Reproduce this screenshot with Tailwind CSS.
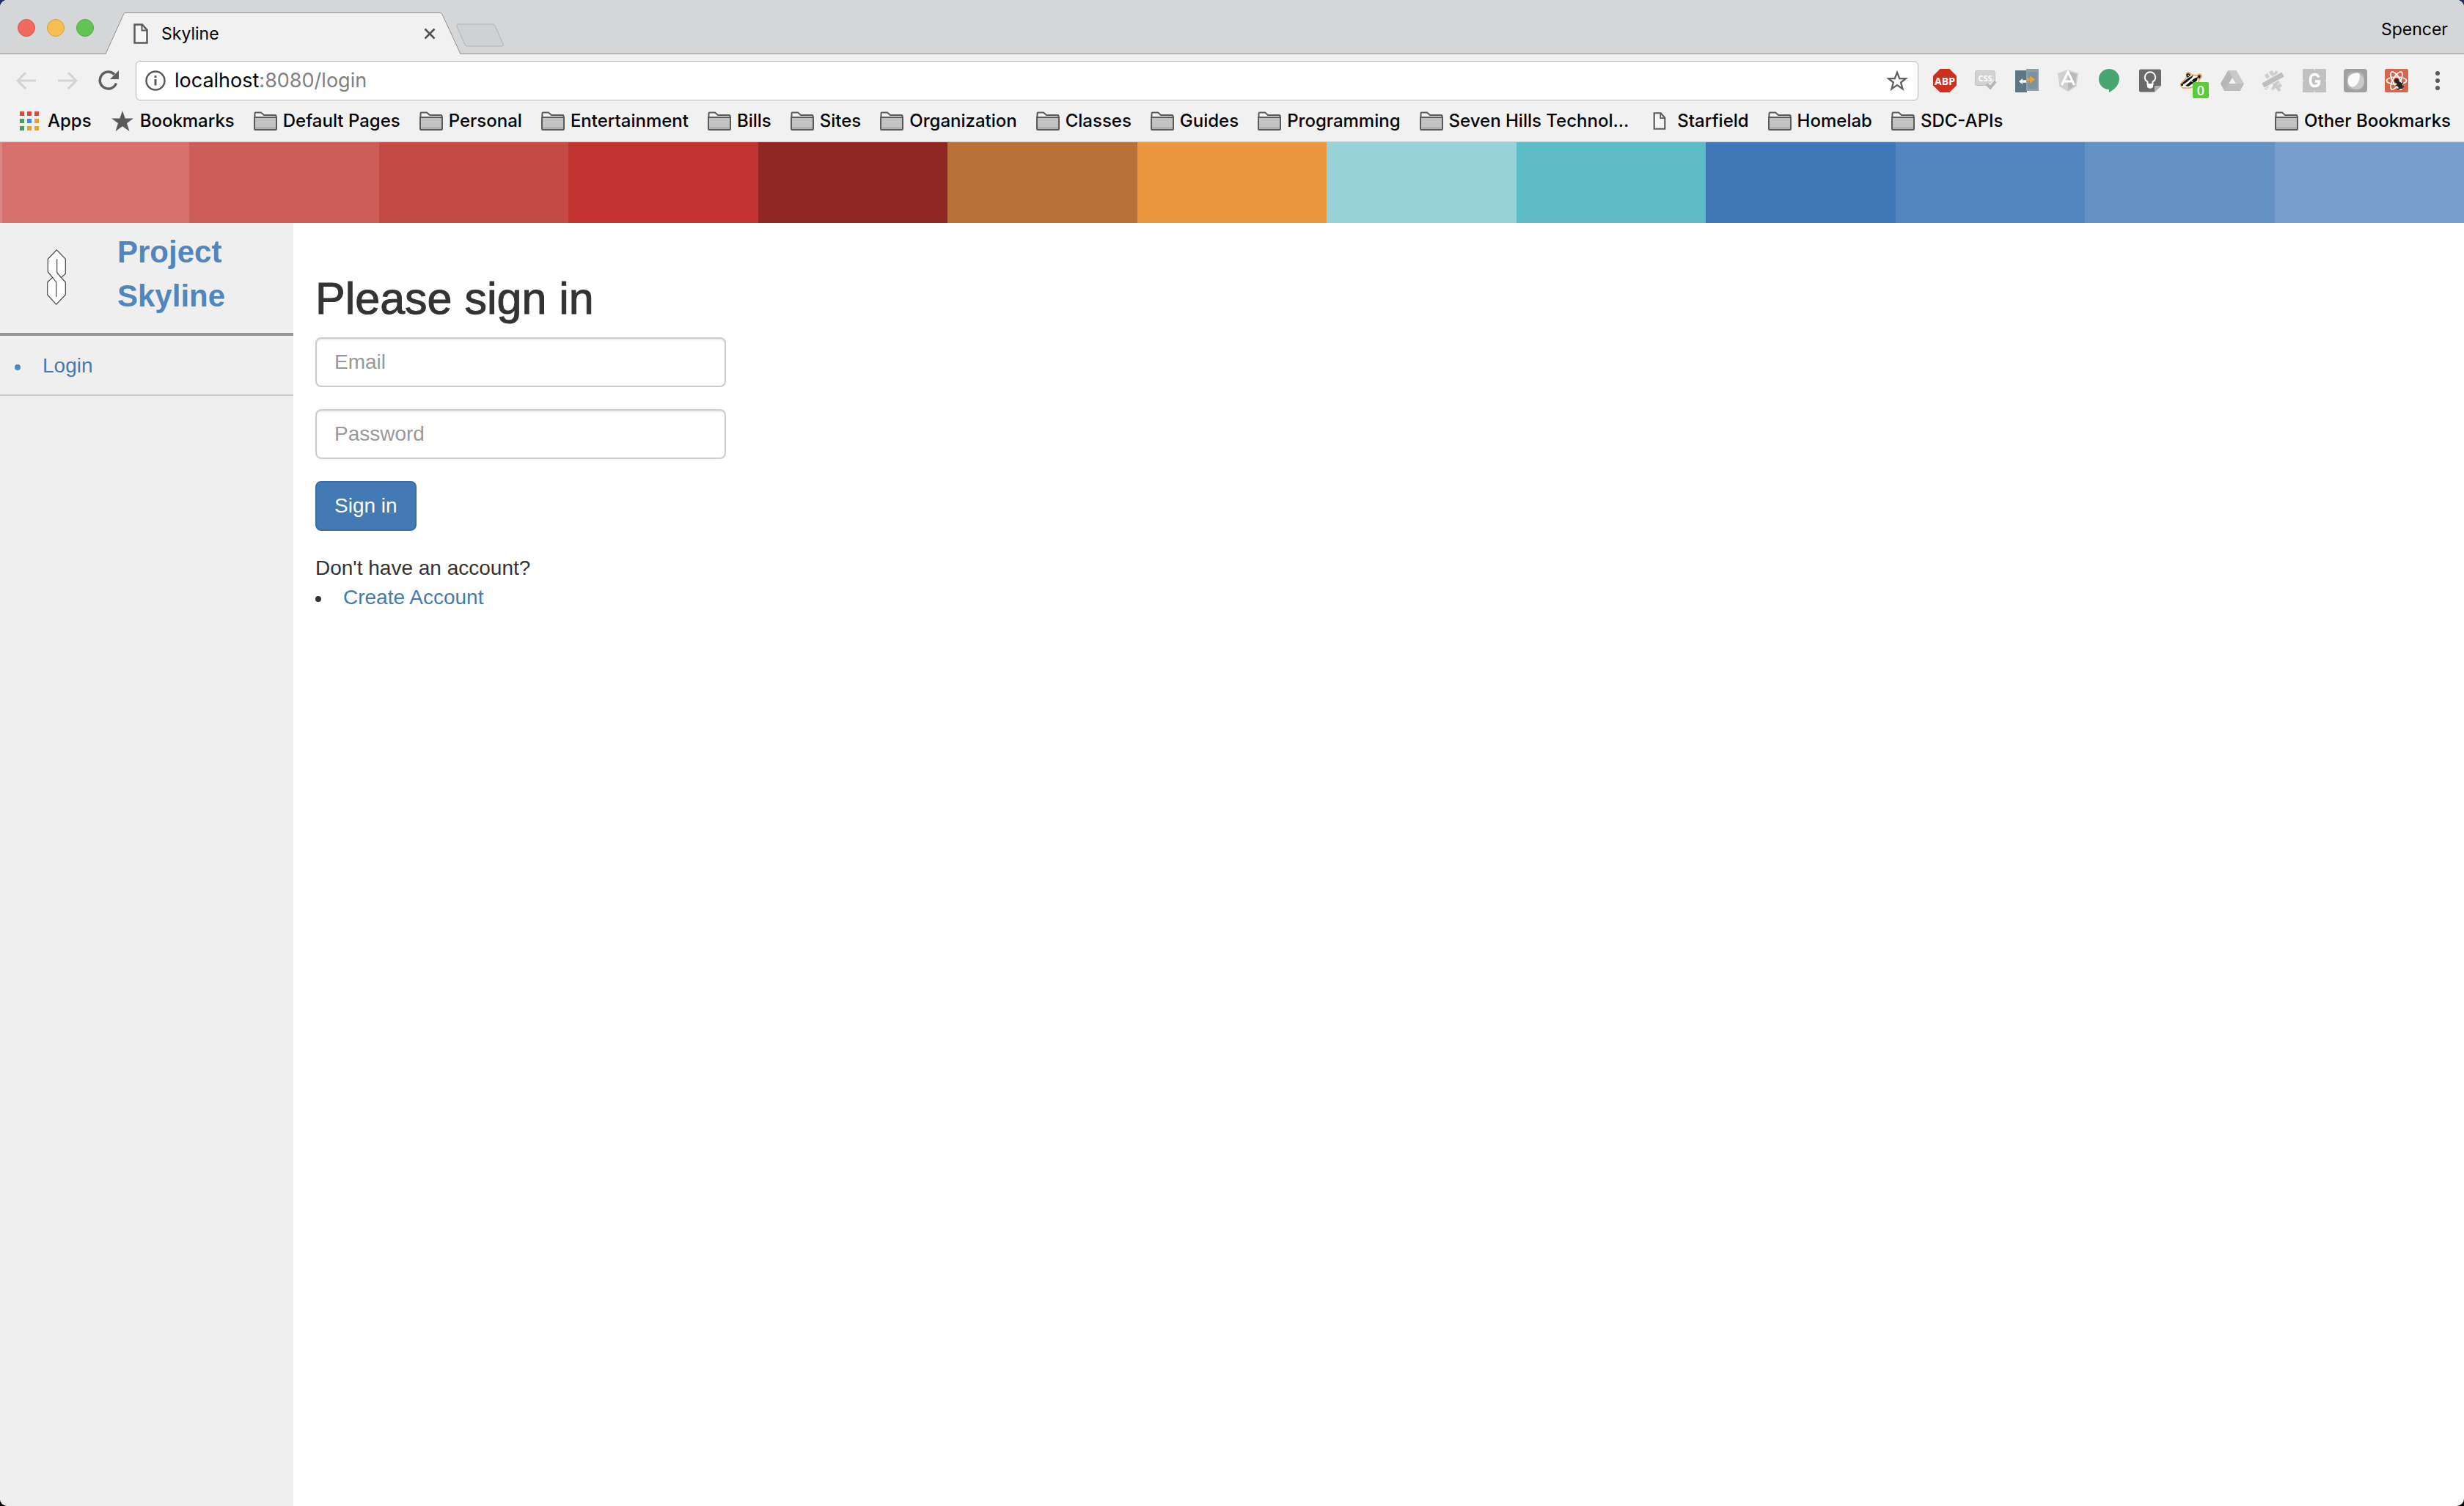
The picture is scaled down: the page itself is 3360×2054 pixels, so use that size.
<!DOCTYPE html>
<html lang="en">
<head>
<meta charset="utf-8">
<title>Skyline</title>
<script src="https://cdn.jsdelivr.net/npm/@tailwindcss/browser@4"></script>
</head>
<body class="min-h-screen bg-linear-to-b from-[#22305a] to-black">
<svg class="hidden">
  <symbol id="folder" viewBox="0 0 32 26">
    <path d="M1.5 8V2.5Q1.5 1.500 2.500 1.500H10L14 5H29.500Q30.500 5 30.500 6V8Z" fill="#f4f4f4" stroke="#5a5a5a" stroke-width="2"/>
    <path d="M1 8H31V24Q31 25 30 25H2Q1 25 1 24Z" fill="#c3c3c3" stroke="#5a5a5a" stroke-width="2"/>
    <path d="M2 22.500H30" stroke="#a9a9a9" stroke-width="2"/>
  </symbol>
  <symbol id="page" viewBox="0 0 20 28">
    <path d="M1.500 1.500H12L18.500 9V26.500H1.500Z" fill="#f5f5f5" stroke="#5a5a5a" stroke-width="2.500"/>
    <path d="M11.500 1.500V9.500H18.500" fill="none" stroke="#5a5a5a" stroke-width="2"/>
  </symbol>
</svg>
<div class="flex min-h-screen flex-col overflow-hidden rounded-[10px] bg-white">
  <header class="bg-[#f1f1f1] font-[Inter,sans-serif] text-black">
    <div class="relative flex h-[74px] items-end bg-[#d5d6d8] shadow-[inset_0_-1px_0_#8f9094]">
      <div class="flex h-full w-[144px] shrink-0 gap-4 pt-[26px] pl-6">
        <button class="size-6 rounded-full border border-[#d9534a] bg-[#ed6b60]" aria-label="Close window"></button>
        <button class="size-6 rounded-full border border-[#d9a13c] bg-[#f5bf4f]" aria-label="Minimize window"></button>
        <button class="size-6 rounded-full border border-[#4fa83f] bg-[#61c554]" aria-label="Zoom window"></button>
      </div>
      <div class="relative h-[57px] w-[484px]">
        <svg class="absolute inset-0 size-full" viewBox="0 0 484 57"><path d="M0 57L24.500 2.500Q25 .5 27 .5H456Q458 .5 459 2.500L484 57Z" fill="#f1f1f1"/><path d="M0 56.500L24.500 2.500Q25 .5 27 .5H456Q458 .5 459 2.500L484 56.500" fill="none" stroke="#8f9094"/></svg>
        <div class="relative flex h-full items-center pr-[34px] pl-[38px]">
          <svg class="h-7 w-5"><use href="#page"/></svg>
          <span class="ml-[18px] flex-1 text-[23px] leading-7">Skyline</span>
          <button aria-label="Close tab"><svg class="size-4" viewBox="0 0 16 16"><path d="M1.500 1.500L14.500 14.500M14.500 1.500L1.500 14.500" stroke="#505050" stroke-width="2.500"/></svg></button>
        </div>
      </div>
      <button class="-ml-2 mb-[10px] h-8 w-[68px]" aria-label="New tab"><svg class="size-full" viewBox="0 0 68 32"><path d="M5 1H51Q54 1 55 3L66 28Q67 31 64 31H18Q15 31 14 29L3 4Q2 1 5 1Z" fill="#d0d1d2" stroke="#b0b1b3"/></svg></button>
      <span class="mb-5 ml-auto pr-[22px] text-[23px] leading-7">Spencer</span>
    </div>
    <div class="flex h-[72px] items-center pr-7 pl-[22px]">
      <button aria-label="Back"><svg class="size-7" viewBox="0 0 28 28"><path d="M13 3L2 14L13 25M2 14H27" fill="none" stroke="#d3d3d3" stroke-width="3"/></svg></button>
      <button class="ml-7" aria-label="Forward"><svg class="size-7" viewBox="0 0 28 28"><path d="M15 3L26 14L15 25M26 14H1" fill="none" stroke="#d3d3d3" stroke-width="3"/></svg></button>
      <button class="ml-7" aria-label="Reload"><svg class="size-7" viewBox="0 0 28 28"><path d="M24.500 17.500A11.500 11.500 0 1 1 22 5.500" fill="none" stroke="#5f5f5f" stroke-width="3.500"/><path d="M28 0V12H16Z" fill="#5f5f5f"/></svg></button>
      <div class="ml-[23px] flex h-[54px] flex-1 items-center rounded-md border border-[#b5b5b5] bg-white pr-3 pl-3">
        <svg class="size-7 shrink-0" viewBox="0 0 28 28"><circle cx="14" cy="14" r="12.500" fill="none" stroke="#5a5a5a" stroke-width="2.500"/><path d="M14 12V20.500M14 7V10" stroke="#5a5a5a" stroke-width="3"/></svg>
        <a href="#" class="ml-3 flex-1 text-[27px] leading-8">localhost<span class="text-[#808080]">:8080/login</span></a>
        <button aria-label="Bookmark this page"><svg class="h-7 w-8" viewBox="0 0 32 30"><path d="M16 3L19.500 12H28.500L21.500 17.700L24 27L16 21.500L8 27L10.500 17.700L3.500 12H12.500Z" fill="none" stroke="#5f5f5f" stroke-width="2.500"/></svg></button>
      </div>
      <div class="ml-5 flex items-center gap-6">
        <svg class="size-8" viewBox="0 0 32 32"><path d="M9.500 0H22.500L32 9.500V22.500L22.500 32H9.500L0 22.500V9.500Z" fill="#cb311c"/><text x="16" y="21.500" text-anchor="middle" class="font-['Open_Sans',sans-serif] text-[14px] font-bold" fill="#fff">ABP</text></svg>
        <svg class="size-8" viewBox="0 0 32 32"><rect x="1.500" y="2.500" width="27" height="20" rx="2" fill="#d2d2d2" stroke="#c2c2c2"/><text x="15" y="16.500" text-anchor="middle" class="font-['Open_Sans',sans-serif] text-[11px] font-bold" fill="#fff">CSS</text><path d="M18 21L22 26L29 17" fill="none" stroke="#f1f1f1" stroke-width="7"/><path d="M17 20.500L22 25.500L29 17" fill="none" stroke="#b5b5b5" stroke-width="4"/></svg>
        <svg class="size-8" viewBox="0 0 32 32"><path d="M0 2H16V32H0Z" fill="#5d7684"/><path d="M15 0H32V30H15Z" fill="#8b9faa"/><path d="M18 4H30V27H18Z" fill="#7b929f"/><path d="M15 17H7" stroke="#fff" stroke-width="3.500"/><path d="M10 13L5 17L10 21Z" fill="#fff"/><path d="M15 14.500H22" stroke="#efa12f" stroke-width="3.500"/><path d="M20 9L27 14.500L20 20Z" fill="#efa12f"/></svg>
        <svg class="size-8" viewBox="0 0 32 32"><path d="M16 1L30 6L27.500 24L16 31L4.500 24L2 6Z" fill="#d0d0d0"/><path d="M16 3V29L25.500 23L28 7.500Z" fill="#b9b9b9"/><path d="M7.500 22L16 4L24.500 22M11 17H21" fill="none" stroke="#fff" stroke-width="3"/></svg>
        <svg class="size-8" viewBox="0 0 32 32"><path d="M16 0A14 14 0 0 1 30 14Q29.500 25 16 32V28A14 14 0 0 1 16 0Z" fill="#4aa671"/></svg>
        <svg class="size-8" viewBox="0 0 32 32"><path d="M3 .5H29Q31 .5 31 2.500V23L22 31.500H3Q1 31.500 1 29.500V2.500Q1 .5 3 .5Z" fill="#6a6a6a"/><path d="M22 31.500V23H31Z" fill="#b3b3b3"/><path d="M12.500 21V17.500Q8.500 15 8.800 11.500A7.200 7.200 0 0 1 23.200 11.500Q23.500 15 19.500 17.500V21Z" fill="none" stroke="#fff" stroke-width="2"/><path d="M12 22H20V25Q16 28.500 12 25Z" fill="#fff"/></svg>
        <div class="relative size-8">
          <svg class="size-8" viewBox="0 0 32 32"><path d="M2 20L8 14L10 11Q8 5 12 5Q15 5 16 8L24 9Q28 5 30 9Q30 13 27 14L25 22L14 26L5 26Q1 24 2 20Z" fill="#fff" stroke="#ee9a3c" stroke-width="1.500"/><path d="M9.500 10Q9 6 12 6Q14 6 15 8.500L11.500 12ZM24.500 10Q27 7 29 9.500Q29 12 26.500 13.500Z" fill="#151515"/><path d="M11.500 8.500L13 9" stroke="#fff" stroke-width="1.500"/><path d="M4 19L11 13L19 8.500L17 12L10 18L5 21ZM8 23L14 18L20 13L25 11L24 16L18 20L12 24Z" fill="#151515"/><path d="M16.500 16.500L18 17.500" stroke="#fff" stroke-width="1.500"/><path d="M2 20L5 20L5 23L2.500 23Z" fill="#151515"/></svg>
          <span class="absolute top-[18px] left-[18px] h-[22px] w-[22px] rounded-[2px] bg-[#5bcb3b] text-center font-['Open_Sans',sans-serif] text-[18px] leading-[22px] font-semibold text-white">0</span>
        </div>
        <svg class="size-8" viewBox="0 0 32 32"><path d="M10.500 2H21.500L32 20L26.500 30H5.500L0 20Z" fill="#c9c9c9"/><path d="M10.500 2L16 11.500L5.500 30L0 20Z" fill="#b7b7b7"/><path d="M10.500 20H32L26.500 30H5.500Z" fill="#bdbdbd"/><path d="M16 12L21 20H11.500Z" fill="#f4f4f4"/></svg>
        <svg class="size-8" viewBox="0 0 32 32"><g fill="none"><path d="M12 3L26 25M6 7L12 17" stroke="#cecece" stroke-width="5" stroke-dasharray="6 1"/><path d="M21 3L5 28M27 6L22 13M22 17L14 29" stroke="#cbcbcb" stroke-width="4" stroke-dasharray="6 1"/><path d="M14 17L25 30" stroke="#cacaca" stroke-width="4"/><path d="M1 23L30 7" stroke="#f1f1f1" stroke-width="9"/><path d="M2 22.500L29 7.500" stroke="#bfbfbf" stroke-width="7"/></g></svg>
        <svg class="size-8" viewBox="0 0 32 32"><rect width="32" height="32" rx="1.500" fill="#c1c1c1"/><path d="M16 0V2M16 30V32M0 16H2M30 16H32" stroke="#eee"/><path d="M22 11.500Q20.500 7.500 16.500 7.500C11.500 7.500 10.500 12 10.500 15.500C10.500 20 12 23.500 16.500 23.500Q22.500 23.500 22.500 17H17" fill="none" stroke="#fff" stroke-width="3.500"/></svg>
        <svg class="size-8" viewBox="0 0 32 32"><rect width="32" height="32" rx="4" fill="#9f9f9f"/><rect x="4" y="4" width="24" height="24" rx="8" fill="#b1b1b1"/><circle cx="17" cy="17" r="11" fill="#c9c9c9"/><path d="M6 20Q4 8 14 6Q21 4 22 8Q22 20 14 24Q9 26 6 20Z" fill="#fafafa"/></svg>
        <svg class="size-8" viewBox="0 0 32 32"><rect width="32" height="32" rx="2.500" fill="#d4664d"/><g fill="none" stroke="#fff" stroke-width="1.700"><ellipse cx="16" cy="16" rx="13.500" ry="5"/><ellipse cx="16" cy="16" rx="13.500" ry="5" transform="rotate(60 16 16)"/><ellipse cx="16" cy="16" rx="13.500" ry="5" transform="rotate(120 16 16)"/></g><circle cx="16" cy="16" r="3" fill="#2a2120"/><ellipse cx="20.500" cy="22" rx="3.500" ry="5.500" transform="rotate(-35 20.500 22)" fill="#2a2120"/><path d="M14.500 23L25 19M17 28L26 24M18 19L24 27" stroke="#2a2120" stroke-width="1.500"/></svg>
        <button class="ml-1" aria-label="Menu"><svg class="h-8 w-5" viewBox="0 0 20 32" fill="#5a5a5a"><circle cx="12" cy="6" r="3"/><circle cx="12" cy="16" r="3"/><circle cx="12" cy="26" r="3"/></svg></button>
      </div>
    </div>
    <nav class="flex h-12 items-start gap-[26px] border-b border-[#c6c6c6] pt-1 pr-[18px] pl-[27px] text-[24px] leading-[30px] font-medium whitespace-nowrap">
      <a href="#" class="flex items-center gap-3"><svg class="size-[26px]" viewBox="0 0 26 26"><path d="M0 0H6V6H0ZM10 0H16V6H10ZM20 0H26V6H20Z" fill="#e0483e"/><path d="M0 10H6V16H0ZM0 20H6V26H0Z" fill="#4e9c5b"/><path d="M10 10H16V16H10Z" fill="#3f8af2"/><path d="M20 10H26V16H20ZM10 20H16V26H10ZM20 20H26V26H20Z" fill="#e2a238"/></svg>Apps</a>
      <a href="#" class="flex items-center gap-2"><svg class="h-7 w-8" viewBox="0 0 32 28"><path d="M16 0L19.700 10.500H31L22 17L25.500 28L16 21.300L6.500 28L10 17L1 10.500H12.300Z" fill="#5a5a5a"/></svg>Bookmarks</a>
      <a href="#" class="flex items-center gap-2"><svg class="h-[26px] w-8"><use href="#folder"/></svg>Default Pages</a>
      <a href="#" class="flex items-center gap-2"><svg class="h-[26px] w-8"><use href="#folder"/></svg>Personal</a>
      <a href="#" class="flex items-center gap-2"><svg class="h-[26px] w-8"><use href="#folder"/></svg>Entertainment</a>
      <a href="#" class="flex items-center gap-2"><svg class="h-[26px] w-8"><use href="#folder"/></svg>Bills</a>
      <a href="#" class="flex items-center gap-2"><svg class="h-[26px] w-8"><use href="#folder"/></svg>Sites</a>
      <a href="#" class="flex items-center gap-2"><svg class="h-[26px] w-8"><use href="#folder"/></svg>Organization</a>
      <a href="#" class="flex items-center gap-2"><svg class="h-[26px] w-8"><use href="#folder"/></svg>Classes</a>
      <a href="#" class="flex items-center gap-2"><svg class="h-[26px] w-8"><use href="#folder"/></svg>Guides</a>
      <a href="#" class="flex items-center gap-2"><svg class="h-[26px] w-8"><use href="#folder"/></svg>Programming</a>
      <a href="#" class="flex items-center gap-2"><svg class="h-[26px] w-8"><use href="#folder"/></svg>Seven Hills Technol...</a>
      <a href="#" class="flex items-center gap-2"><svg class="h-6 w-8"><use href="#page"/></svg>Starfield</a>
      <a href="#" class="flex items-center gap-2"><svg class="h-[26px] w-8"><use href="#folder"/></svg>Homelab</a>
      <a href="#" class="flex items-center gap-2"><svg class="h-[26px] w-8"><use href="#folder"/></svg>SDC-APIs</a>
      <a href="#" class="ml-auto flex items-center gap-2"><svg class="h-[26px] w-8"><use href="#folder"/></svg>Other Bookmarks</a>
    </nav>
  </header>

  <div class="grid h-[110px] grid-cols-13">
    <div class="border-l-3 border-[#dd8583] bg-[#d5706d]"></div>
    <div class="bg-[#cd5d59]"></div>
    <div class="bg-[#c54a46]"></div>
    <div class="bg-[#c13431]"></div>
    <div class="bg-[#8f2624]"></div>
    <div class="bg-[#b87139]"></div>
    <div class="bg-[#ea973f]"></div>
    <div class="bg-[#99d1d9]"></div>
    <div class="bg-[#5dbcc6]"></div>
    <div class="bg-[#4077b7]"></div>
    <div class="bg-[#5386bf]"></div>
    <div class="bg-[#6592c4]"></div>
    <div class="bg-[#7b9fcd]"></div>
  </div>

  <div class="flex flex-1 font-['Liberation_Sans',Arial,sans-serif] text-[28px] leading-10 text-[#333]">
    <aside class="w-[400px] shrink-0 bg-[#efefef]">
      <div class="flex h-[154px] border-b-4 border-[#95989a]">
        <svg class="mt-9 ml-16 h-[76px] w-[26px] shrink-0" viewBox="0 0 26 76"><path d="M13.300 .8L25.300 13.300V33.300L19.300 38.500L25.300 45V62L12.700 75.200L.7 62V45L7.700 38.500L1.300 30.700V13.300Z" fill="#fff" stroke="#4a4a4a" stroke-width="1.200"/><path d="M13.700 13.300V31.700L19.300 38.500M7.700 38.500L12.700 45V65" fill="none" stroke="#4a4a4a" stroke-width="1.200"/></svg>
        <h1 class="mt-[10px] ml-[70px] w-[200px] text-[42px] leading-[60px] font-bold text-[#5085be]">Project Skyline</h1>
      </div>
      <ul class="border-b-2 border-[#c8c8c8] pt-[21px] pb-[19px] pl-[58px] text-[#5085be]">
        <li class="relative before:absolute before:top-[18px] before:-left-[38px] before:size-2 before:rounded-full before:bg-[#5085be]"><a href="#" class="text-[#447ab3]">Login</a></li>
      </ul>
    </aside>
    <main class="flex-1 px-[30px] pt-[70px]">
      <form class="flex w-[560px] flex-col items-start">
        <h2 class="text-[61px] leading-[66px] font-normal [-webkit-text-stroke:1px_#333]">Please sign in</h2>
        <input type="email" aria-label="Email" placeholder="Email" class="mt-5 h-[68px] w-full rounded-lg border-2 border-[#ccc] px-6 shadow-[inset_0_2px_2px_#00000013] placeholder:text-[#999]">
        <input type="password" aria-label="Password" placeholder="Password" class="mt-[30px] h-[68px] w-full rounded-lg border-2 border-[#ccc] px-6 shadow-[inset_0_2px_2px_#00000013] placeholder:text-[#999]">
        <button type="button" class="mt-[30px] h-[68px] rounded-lg border-2 border-[#3b6ea5] bg-[#447ab3] px-6 text-white">Sign in</button>
      </form>
      <p class="mt-[31px]">Don't have an account?</p>
      <ul class="pl-[38px]">
        <li class="relative before:absolute before:top-[18px] before:-left-[38px] before:size-2 before:rounded-full before:bg-[#333]"><a href="#" class="text-[#447ab3]">Create Account</a></li>
      </ul>
    </main>
  </div>
</div>
</body>
</html>
